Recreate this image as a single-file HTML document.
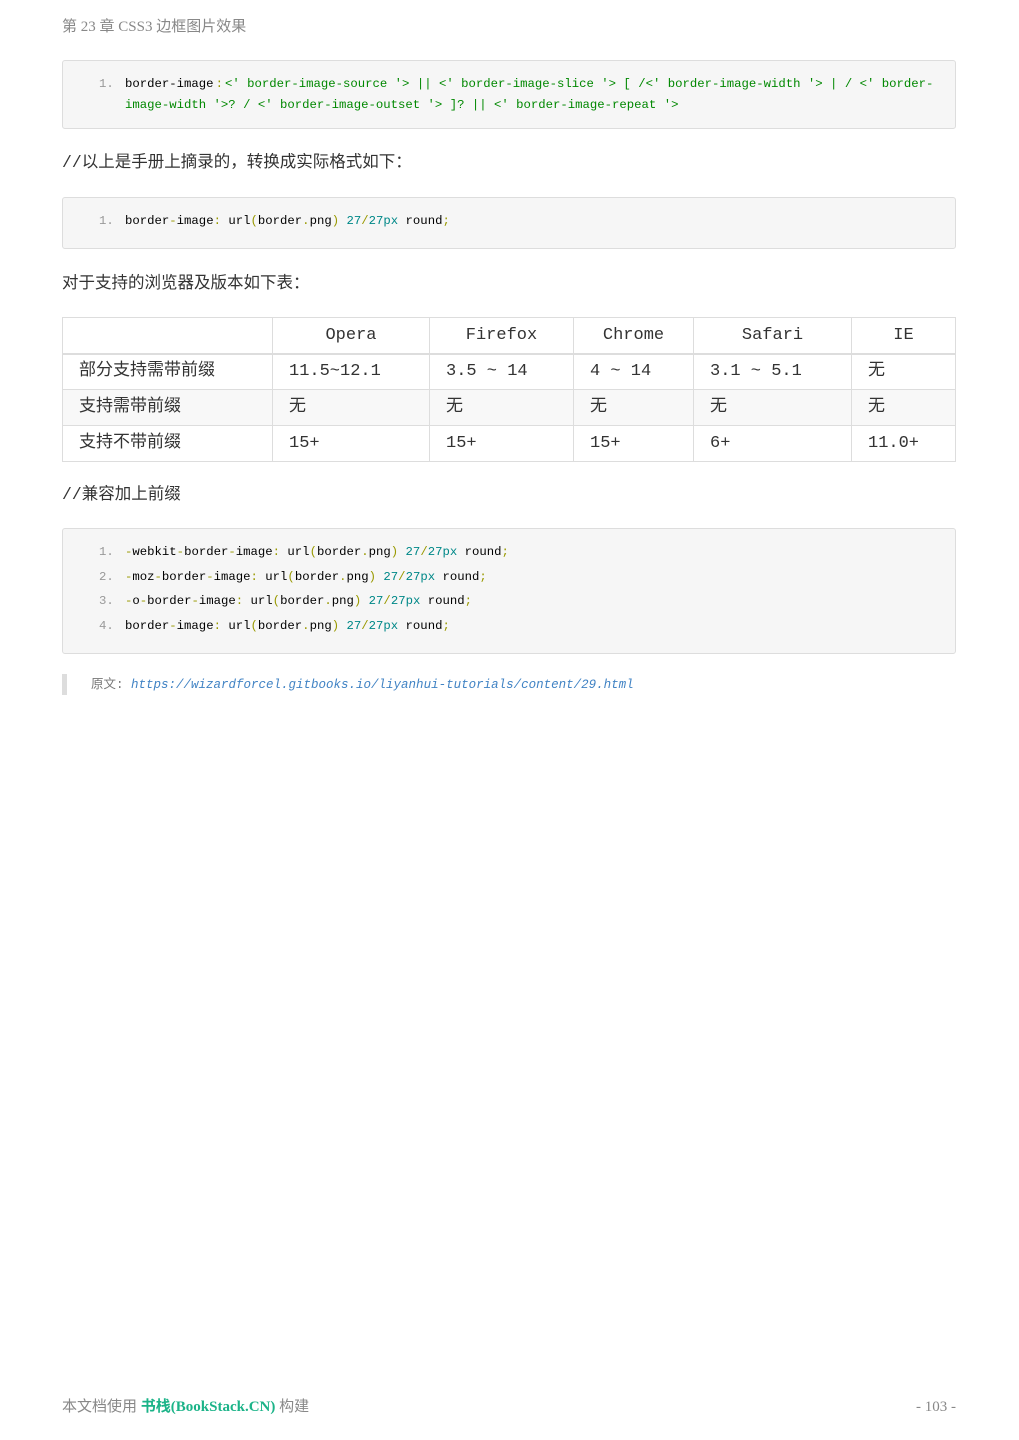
<!DOCTYPE html>
<html><head><meta charset="utf-8"><style>
body{margin:0;width:1019px;height:1440px;background:#fff;position:relative;font-family:"Liberation Sans","Noto Sans CJK SC",sans-serif;color:#333}
.hdr{position:absolute;left:62px;top:17px;line-height:20px;font-family:"Liberation Serif","Noto Sans CJK SC",serif;font-size:15px;color:#888}
.code{position:absolute;left:62px;width:894px;background:#f6f6f6;border:1px solid #ddd;border-radius:3px;font-family:"Liberation Mono",monospace;font-size:12.3px;color:#000;box-sizing:border-box}
.ln{position:absolute;left:36px;color:#999}
.l{position:absolute;left:62px;white-space:pre}
.s{color:#080}.n{color:#088}.p{color:#990}
.txt{position:absolute;left:62px;font-family:"Liberation Mono","Noto Sans CJK SC",monospace;font-size:16.5px;color:#333;line-height:22px}
table{position:absolute;left:62px;top:317px;width:894px;border-collapse:collapse;font-family:"Liberation Mono","Noto Sans CJK SC",monospace;font-size:17px;color:#333}
td,th{border:1px solid #ddd;height:36px;line-height:34px;padding:0 16px;text-align:left;font-weight:normal;vertical-align:middle;box-sizing:border-box}
th{text-align:center;border-bottom:2px solid #ddd;height:36px;line-height:33px}
tr.g td{background:#f8f8f8}
.foot{position:absolute;top:1397px;line-height:20px;font-family:"Liberation Serif","Noto Sans CJK SC",serif;font-size:15px;color:#888}
</style></head><body>
<div class="hdr">第 23 章 CSS3 边框图片效果</div>

<div class="code" style="top:60px;height:69px">
<span class="ln" style="top:16px">1.</span>
<span class="l" style="top:16px">border-image<span class="p" style="margin:0 2px">:</span><span class="s">&lt;' border-image-source '&gt; || &lt;' border-image-slice '&gt; [ /&lt;' border-image-width '&gt; | / &lt;' border-</span></span>
<span class="l s" style="top:37px">image-width '&gt;? / &lt;' border-image-outset '&gt; ]? || &lt;' border-image-repeat '&gt;</span>
</div>

<div class="txt" style="top:152px">//以上是手册上摘录的，转换成实际格式如下：</div>

<div class="code" style="top:197px;height:52px">
<span class="ln" style="top:16px">1.</span>
<span class="l" style="top:16px">border<span class="p">-</span>image<span class="p">:</span> url<span class="p">(</span>border<span class="p">.</span>png<span class="p">)</span> <span class="n">27</span><span class="p">/</span><span class="n">27px</span> round<span class="p">;</span></span>
</div>

<div class="txt" style="top:273px">对于支持的浏览器及版本如下表：</div>

<table>
<tr><th style="width:210px"></th><th style="width:157px">Opera</th><th style="width:144px">Firefox</th><th style="width:120px">Chrome</th><th style="width:158px">Safari</th><th>IE</th></tr>
<tr><td>部分支持需带前缀</td><td>11.5~12.1</td><td>3.5 ~ 14</td><td>4 ~ 14</td><td>3.1 ~ 5.1</td><td>无</td></tr>
<tr class="g"><td>支持需带前缀</td><td>无</td><td>无</td><td>无</td><td>无</td><td>无</td></tr>
<tr><td>支持不带前缀</td><td>15+</td><td>15+</td><td>15+</td><td>6+</td><td>11.0+</td></tr>
</table>

<div class="txt" style="top:484px">//兼容加上前缀</div>

<div class="code" style="top:528px;height:126px">
<span class="ln" style="top:16px">1.</span>
<span class="l" style="top:16px"><span class="p">-</span>webkit<span class="p">-</span>border<span class="p">-</span>image<span class="p">:</span> url<span class="p">(</span>border<span class="p">.</span>png<span class="p">)</span> <span class="n">27</span><span class="p">/</span><span class="n">27px</span> round<span class="p">;</span></span>
<span class="ln" style="top:41px">2.</span>
<span class="l" style="top:41px"><span class="p">-</span>moz<span class="p">-</span>border<span class="p">-</span>image<span class="p">:</span> url<span class="p">(</span>border<span class="p">.</span>png<span class="p">)</span> <span class="n">27</span><span class="p">/</span><span class="n">27px</span> round<span class="p">;</span></span>
<span class="ln" style="top:65px">3.</span>
<span class="l" style="top:65px"><span class="p">-</span>o<span class="p">-</span>border<span class="p">-</span>image<span class="p">:</span> url<span class="p">(</span>border<span class="p">.</span>png<span class="p">)</span> <span class="n">27</span><span class="p">/</span><span class="n">27px</span> round<span class="p">;</span></span>
<span class="ln" style="top:90px">4.</span>
<span class="l" style="top:90px">border<span class="p">-</span>image<span class="p">:</span> url<span class="p">(</span>border<span class="p">.</span>png<span class="p">)</span> <span class="n">27</span><span class="p">/</span><span class="n">27px</span> round<span class="p">;</span></span>
</div>

<div style="position:absolute;left:62px;top:674px;width:5px;height:21px;background:#ddd"></div>
<div style="position:absolute;left:91px;top:678px;line-height:14px;font-size:12.5px;color:#777;font-family:'Liberation Mono','Noto Sans CJK SC',monospace">原文: <i style="color:#4183c4">https://wizardforcel.gitbooks.io/liyanhui-tutorials/content/29.html</i></div>

<div class="foot" style="left:62px">本文档使用 <b style="color:#1bb388">书栈(BookStack.CN)</b> 构建</div>
<div class="foot" style="right:63px">- 103 -</div>
</body></html>
